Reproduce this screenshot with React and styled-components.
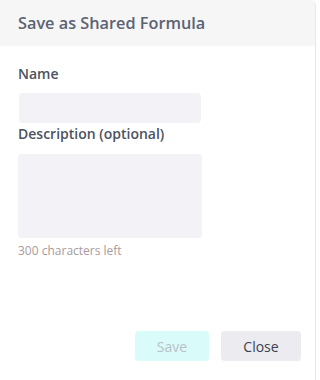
import React from "react";
import styled, { createGlobalStyle } from "styled-components";

const GlobalStyle = createGlobalStyle`
  html, body {
    margin: 0;
    padding: 0;
    background: #ffffff;
  }
  body {
    font-family: "Open Sans", "Noto Sans", sans-serif;
  }
`;

const Dialog = styled.div`
  width: 316px;
  height: 380px;
  box-sizing: border-box;
  border-right: 1px solid #e6e6e6;
  border-top-right-radius: 6px;
  display: flex;
  flex-direction: column;
  overflow: hidden;
`;

const Header = styled.div`
  height: 46px;
  background: #f6f6f6;
  display: flex;
  align-items: center;
  padding: 0 18px;
  flex-shrink: 0;
`;

const Title = styled.h2`
  margin: 0;
  font-size: 16.3px;
  font-weight: 600;
  color: #5b6374;
`;

const Body = styled.div`
  flex: 1;
  padding: 18px 18px 0;
  display: flex;
  flex-direction: column;
`;

const Label = styled.label`
  font-size: 14px;
  font-weight: 600;
  color: #4c5260;
  line-height: 20px;
  margin-bottom: ${(p) => p.$gap || 9}px;
`;

const Input = styled.input`
  width: 182px;
  height: 30px;
  box-sizing: border-box;
  border: none;
  border-radius: 4px;
  background: #f2f2f7;
  margin-left: 1px;
  margin-bottom: 1px;
  outline: none;
`;

const TextArea = styled.textarea`
  width: 184px;
  height: 84px;
  box-sizing: border-box;
  border: none;
  border-radius: 4px;
  background: #f2f2f7;
  resize: none;
  outline: none;
  margin: 0;
  display: block;
`;

const Hint = styled.div`
  font-size: 12px;
  line-height: 16px;
  color: #a89b9b;
  margin-top: 5px;
`;

const Footer = styled.div`
  display: flex;
  justify-content: flex-end;
  gap: 12px;
  padding: 0 14px 19px;
`;

const Button = styled.button`
  height: 30px;
  width: ${(p) => p.$w}px;
  border: none;
  border-radius: 4px;
  font-family: inherit;
  font-size: 14px;
  background: ${(p) => (p.$primary ? "#d9fbfa" : "#ebebf0")};
  color: ${(p) => (p.$primary ? "#b9c1c8" : "#3b4150")};
  cursor: ${(p) => (p.disabled ? "default" : "pointer")};
`;

export default function App() {
  return (
    <>
      <GlobalStyle />
      <Dialog>
        <Header>
          <Title>Save as Shared Formula</Title>
        </Header>
        <Body>
          <Label>Name</Label>
          <Input />
          <Label $gap={10}>Description (optional)</Label>
          <TextArea />
          <Hint>300 characters left</Hint>
        </Body>
        <Footer>
          <Button $primary $w={74} disabled>
            Save
          </Button>
          <Button $w={80}>Close</Button>
        </Footer>
      </Dialog>
    </>
  );
}
